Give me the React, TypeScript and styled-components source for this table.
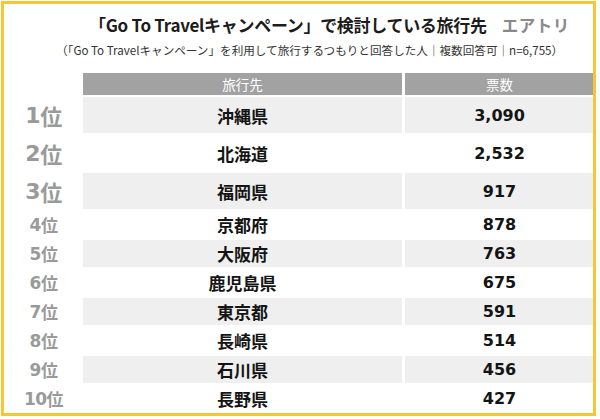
import React from "react";
import styled, { createGlobalStyle } from "styled-components";

const GlobalStyle = createGlobalStyle`
  html, body { margin: 0; padding: 0; background: #ffffff; }
  body { font-family: "Noto Sans CJK JP", "Noto Sans", sans-serif; }
`;

const Frame = styled.div`
  box-sizing: border-box;
  margin: 1px;
  width: 595px;
  height: 415px;
  border: 3px solid #f2c83a;
  background: #ffffff;
  display: flex;
  flex-direction: column;
  overflow: hidden;
`;

const TitleRow = styled.div`
  display: flex;
  align-items: center;
  height: 24px;
  margin-top: 9px;
  padding-left: 85px;
  gap: 15px;
`;

const Title = styled.h1`
  margin: 0;
  font-size: 17px;
  line-height: 24px;
  font-weight: 700;
  letter-spacing: -0.3px;
  color: #1c1c1c;
  white-space: nowrap;
`;

const Logo = styled.span`
  flex-shrink: 0;
  white-space: nowrap;
  font-size: 16.5px;
  line-height: 24px;
  font-weight: 700;
  color: #8a8a8a;
  letter-spacing: 0.5px;
`;

const Subtitle = styled.p`
  margin: 5px 0 0;
  padding-left: 52px;
  font-size: 11.6px;
  line-height: 16px;
  color: #333333;
  white-space: nowrap;
`;

const Table = styled.div`
  margin-top: 15px;
  display: flex;
  flex-direction: column;
  gap: 2px;
`;

const Row = styled.div<{ $h: number }>`
  display: grid;
  grid-template-columns: 76px 319px 189px;
  column-gap: 3px;
  height: ${(p) => p.$h}px;
`;

const HeadCell = styled.div`
  background: #a2a2a2;
  color: #ffffff;
  font-size: 13.5px;
  display: flex;
  align-items: center;
  justify-content: center;
`;

const Rank = styled.div<{ $big: boolean }>`
  margin-right: -3px;
  display: flex;
  align-items: center;
  justify-content: center;
  color: #9a9a9a;
  font-weight: 700;
  font-size: ${(p) => (p.$big ? 22 : 17)}px;
  font-family: "DejaVu Sans", "Noto Sans CJK JP", sans-serif;
  letter-spacing: -0.5px;
`;

const RankUnit = styled.span`
  font-family: "Noto Sans CJK JP", sans-serif;
`;

const Cell = styled.div<{ $shade: boolean }>`
  background: ${(p) => (p.$shade ? "#efefef" : "#ffffff")};
  display: flex;
  align-items: center;
  justify-content: center;
  color: #141414;
  font-weight: 700;
`;

const Name = styled(Cell)`
  font-size: 17px;
  font-family: "Noto Sans CJK JP", sans-serif;
`;

const Value = styled(Cell)`
  font-size: 16px;
  font-family: "DejaVu Sans", sans-serif;
`;

const Spacer = styled.div`
  margin-right: -3px;
`;

const data: [string, string][] = [
  ["沖縄県", "3,090"],
  ["北海道", "2,532"],
  ["福岡県", "917"],
  ["京都府", "878"],
  ["大阪府", "763"],
  ["鹿児島県", "675"],
  ["東京都", "591"],
  ["長崎県", "514"],
  ["石川県", "456"],
  ["長野県", "427"],
];

export default function App() {
  return (
    <>
      <GlobalStyle />
      <Frame>
        <TitleRow>
          <Title>「Go To Travelキャンペーン」で検討している旅行先</Title>
          <Logo>エアトリ</Logo>
        </TitleRow>
        <Subtitle>
          （「Go To Travelキャンペーン」を利用して旅行するつもりと回答した人｜複数回答可｜n=6,755）
        </Subtitle>
        <Table>
          <Row $h={22}>
            <Spacer />
            <HeadCell>旅行先</HeadCell>
            <HeadCell>票数</HeadCell>
          </Row>
          {data.map(([name, value], i) => {
            const big = i < 3;
            const shade = i % 2 === 0;
            return (
              <Row key={name} $h={big ? 36 : 27}>
                <Rank $big={big}>
                  {i + 1}
                  <RankUnit>位</RankUnit>
                </Rank>
                <Name $shade={shade}>{name}</Name>
                <Value $shade={shade}>{value}</Value>
              </Row>
            );
          })}
        </Table>
      </Frame>
    </>
  );
}
